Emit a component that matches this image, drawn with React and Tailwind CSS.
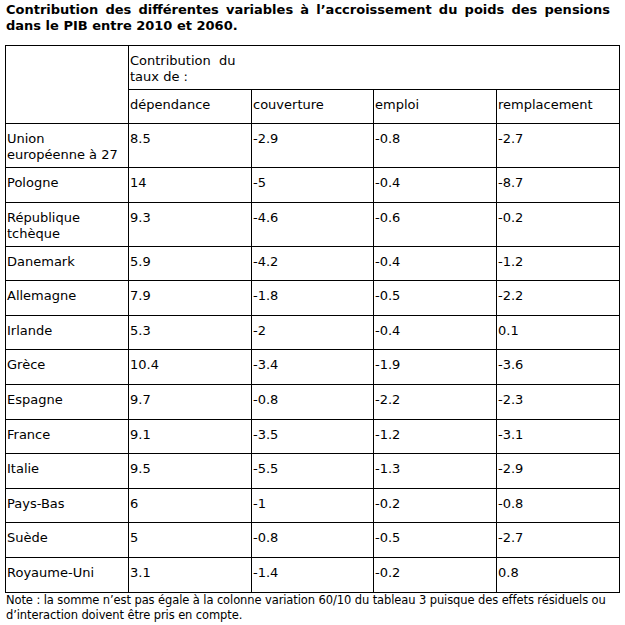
import React from "react";

const rows = [
  { name: ["Union", "européenne à 27"], v: ["8.5", "-2.9", "-0.8", "-2.7"], tall: true },
  { name: ["Pologne"], v: ["14", "-5", "-0.4", "-8.7"] },
  { name: ["République", "tchèque"], v: ["9.3", "-4.6", "-0.6", "-0.2"], tall: true },
  { name: ["Danemark"], v: ["5.9", "-4.2", "-0.4", "-1.2"] },
  { name: ["Allemagne"], v: ["7.9", "-1.8", "-0.5", "-2.2"] },
  { name: ["Irlande"], v: ["5.3", "-2", "-0.4", "0.1"] },
  { name: ["Grèce"], v: ["10.4", "-3.4", "-1.9", "-3.6"] },
  { name: ["Espagne"], v: ["9.7", "-0.8", "-2.2", "-2.3"] },
  { name: ["France"], v: ["9.1", "-3.5", "-1.2", "-3.1"] },
  { name: ["Italie"], v: ["9.5", "-5.5", "-1.3", "-2.9"] },
  { name: ["Pays-Bas"], v: ["6", "-1", "-0.2", "-0.8"] },
  { name: ["Suède"], v: ["5", "-0.8", "-0.5", "-2.7"] },
  { name: ["Royaume-Uni"], v: ["3.1", "-1.4", "-0.2", "0.8"] },
];

const td = "border border-black align-top pt-[7px] pl-[1px] pr-1 leading-[16px]";

export default function App() {
  return (
    <div className="w-[625px] h-[625px] bg-white text-black px-[5px] font-['DejaVu_Sans',sans-serif]">
      <h1 className="pt-[2px] pl-[1px] pr-[10px] text-[13px] leading-[16px] font-bold text-justify">
        Contribution des différentes variables à l’accroissement du poids des pensions dans le PIB entre 2010 et 2060.
      </h1>

      <table className="mt-[11px] w-[614px] table-fixed border-collapse text-[13px]">
        <colgroup>
          <col className="w-[123px]" />
          <col className="w-[123px]" />
          <col className="w-[122px]" />
          <col className="w-[123px]" />
          <col className="w-[123px]" />
        </colgroup>
        <tbody>
          <tr className="h-[44px]">
            <td rowSpan={2} className={td}></td>
            <td colSpan={4} className={td}>
              Contribution&nbsp; du
              <br />
              taux de :
            </td>
          </tr>
          <tr className="h-[34px]">
            <td className={td}>dépendance</td>
            <td className={td}>couverture</td>
            <td className={td}>emploi</td>
            <td className={td}>remplacement</td>
          </tr>
          {rows.map((r, i) => (
            <tr key={i} className={r.tall ? "h-[44px]" : "h-[34.6px]"}>
              <td className={td}>
                {r.name.map((n, j) => (
                  <div key={j}>{n}</div>
                ))}
              </td>
              {r.v.map((x, j) => (
                <td key={j} className={td}>
                  {x}
                </td>
              ))}
            </tr>
          ))}
        </tbody>
      </table>

      <p className="pl-[1px] pr-[10px] text-[11.5px] leading-[15px] tracking-[-0.1px]">
        Note : la somme n’est pas égale à la colonne variation 60/10 du tableau 3 puisque des effets résiduels ou d’interaction doivent être pris en compte.
      </p>
    </div>
  );
}
